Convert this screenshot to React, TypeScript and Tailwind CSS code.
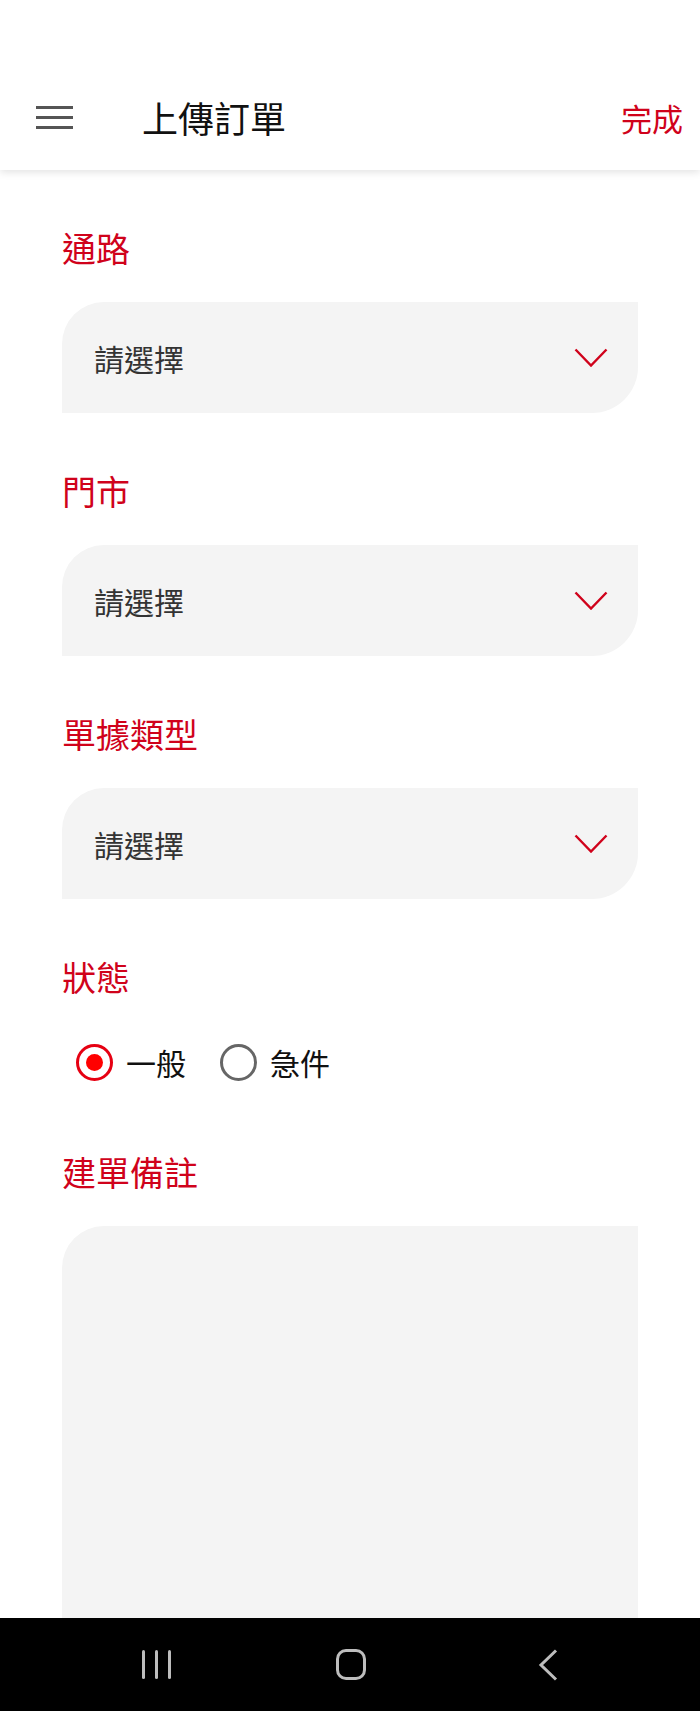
import React, { useState } from 'react';

const FONT = '"Noto Sans CJK TC", "Noto Sans", sans-serif';

const Chevron = () => (
  <svg width="34" height="20" viewBox="0 0 34 20" fill="none" className="shrink-0">
    <path d="M1.5 1.5 L17 17.5 L32.5 1.5" stroke="#d0021b" strokeWidth="2.4" />
  </svg>
);

const SelectField: React.FC<{ label: string }> = ({ label }) => (
  <div className="pt-[54px]">
    <div className="h-[48px] flex items-center text-[34px] leading-none text-[#d0021b]">{label}</div>
    <button className="mt-[30px] w-full h-[111px] bg-[#f4f4f4] rounded-tl-[42px] rounded-br-[46px] flex items-center justify-between pl-[32px] pr-[30px]">
      <span className="text-[30px] leading-none text-[#333333]">請選擇</span>
      <Chevron />
    </button>
  </div>
);

const Radio: React.FC<{ checked: boolean; label: string; onClick: () => void }> = ({ checked, label, onClick }) => (
  <button onClick={onClick} className="flex items-center gap-[13px]">
    {checked ? (
      <span className="w-[37px] h-[37px] rounded-full border-[3px] border-[#e60012] flex items-center justify-center">
        <span className="w-[17px] h-[17px] rounded-full bg-[#ff0000]" />
      </span>
    ) : (
      <span className="w-[37px] h-[37px] rounded-full border-[3px] border-[#666666]" />
    )}
    <span className="text-[30px] leading-none text-[#111111]">{label}</span>
  </button>
);

export default function App() {
  const [status, setStatus] = useState<'normal' | 'urgent'>('normal');

  return (
    <div className="w-[700px] h-[1711px] bg-white flex flex-col overflow-hidden" style={{ fontFamily: FONT }}>
      {/* Top bar */}
      <header className="relative h-[170px] shrink-0 pt-[64px] flex items-center bg-white shadow-[0_2px_8px_rgba(0,0,0,0.12)] z-10">
        <div className="w-[142px] pl-[36px] flex flex-col gap-[7px]">
          <span className="block w-[37px] h-[3px] bg-[#555555]" />
          <span className="block w-[37px] h-[3px] bg-[#555555]" />
          <span className="block w-[37px] h-[3px] bg-[#555555]" />
        </div>
        <h1 className="text-[36px] leading-none text-[#111111] font-normal">上傳訂單</h1>
        <button className="ml-auto mr-[17px] text-[31px] leading-none text-[#d0021b]">完成</button>
      </header>

      {/* Form */}
      <main className="flex-1 px-[62px]">
        <SelectField label="通路" />
        <SelectField label="門市" />
        <SelectField label="單據類型" />

        <div className="pt-[54px]">
          <div className="h-[48px] flex items-center text-[34px] leading-none text-[#d0021b]">狀態</div>
          <div className="mt-[42px] h-[38px] pl-[14px] flex items-center gap-[34px]">
            <Radio checked={status === 'normal'} label="一般" onClick={() => setStatus('normal')} />
            <Radio checked={status === 'urgent'} label="急件" onClick={() => setStatus('urgent')} />
          </div>
        </div>

        <div className="pt-[67px]">
          <div className="h-[48px] flex items-center text-[34px] leading-none text-[#d0021b]">建單備註</div>
          <textarea className="mt-[30px] block w-full h-[392px] bg-[#f4f4f4] rounded-tl-[42px] resize-none outline-none" />
        </div>
      </main>

      {/* Android nav bar */}
      <nav className="h-[93px] shrink-0 bg-black flex items-center pl-[142px]">
        <div className="flex gap-[10px]">
          <span className="block w-[3px] h-[29px] bg-[#bdbdbd] rounded" />
          <span className="block w-[3px] h-[29px] bg-[#bdbdbd] rounded" />
          <span className="block w-[3px] h-[29px] bg-[#bdbdbd] rounded" />
        </div>
        <span className="ml-[165px] block w-[30px] h-[31px] rounded-[10px] border-[3px] border-[#bdbdbd]" />
        <svg width="20" height="32" viewBox="0 0 20 32" fill="none" className="ml-[172px]">
          <path d="M18 1.5 L3 16 L18 30.5" stroke="#bdbdbd" strokeWidth="3" />
        </svg>
      </nav>
    </div>
  );
}
